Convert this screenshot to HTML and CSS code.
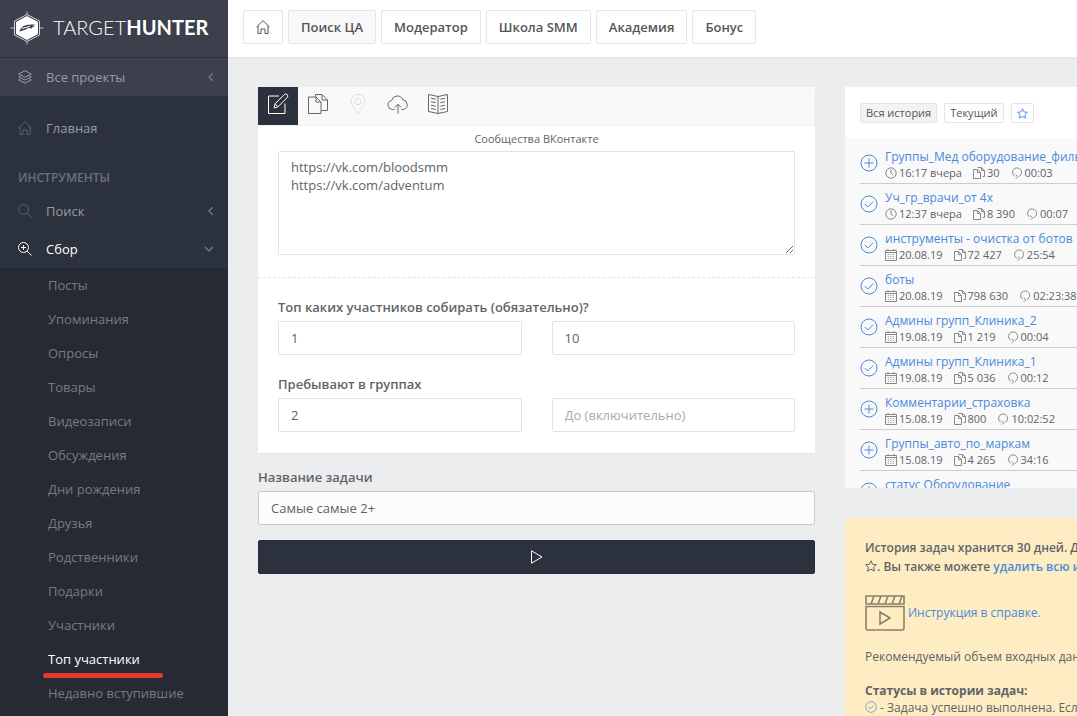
FILE: index.html
```html
<!DOCTYPE html>
<html lang="ru">
<head>
<meta charset="utf-8">
<title>TargetHunter</title>
<link rel="stylesheet" href="styles.css">
</head>
<body>
<svg class="sprite" aria-hidden="true">
  <symbol id="home" viewBox="0 0 14 14"><path d="M.5 7 7 .7 13.500 7M2 5.800v7.700h3V9h4v4.500h3V5.800"/></symbol>
  <symbol id="layers" viewBox="0 0 14 14"><path d="M7 .7 13.300 4 7 7.300.7 4zM2.600 5.800.7 6.800 7 10.100l6.300-3.300-1.900-1M2.600 8.900.7 9.900 7 13.200l6.300-3.300-1.900-1"/></symbol>
  <symbol id="search" viewBox="0 0 14 14"><circle cx="5.500" cy="5.500" r="5"/><path d="m9 9 4.500 4.500"/></symbol>
  <symbol id="zoomin" viewBox="0 0 14 14"><circle cx="5.500" cy="5.500" r="5"/><path d="m9 9 4.500 4.500M5.500 3v5M3 5.500h5"/></symbol>
  <symbol id="left" viewBox="0 0 8 8"><path d="M5.500 1 2.300 4l3.200 3"/></symbol>
  <symbol id="down" viewBox="0 0 8 8"><path d="M.8 2.400 4 5.600l3.200-3.200"/></symbol>
  <symbol id="edit" viewBox="0 0 22 22"><path d="M12 3H1.500v17.500H18V10.500M7 15l1-4.200L17.300 1.600a1.900 1.900 0 0 1 2.900 2.900L11 13.800zM8 10.800l3 3"/></symbol>
  <symbol id="copy" viewBox="0 0 22 22"><path d="M1.500 4H9l5 5v11.500H1.500zM9 4v5h5M8.500 3.800V1.500H15l5.500 5.500v10.500H14.500M15 1.500V7h5.500"/></symbol>
  <symbol id="copy-mini" viewBox="0 0 12 12"><path d="M.5 2.500h4l3 3v6h-7zM4.500 2.500v3h3M4.500.5h4l3 3v6h-2M8.500.5v3h3"/></symbol>
  <symbol id="pin" viewBox="0 0 22 22"><path d="M11 20.500C8 16 4 11.800 4 8.300a7 7 0 0 1 14 0c0 3.500-4 7.700-7 12.200z"/><circle cx="11" cy="8.500" r="3.200"/></symbol>
  <symbol id="cloud" viewBox="0 0 22 22"><path d="M7.500 16.500h-2a4.500 4.500 0 0 1-.9-8.900A5.800 5.800 0 0 1 15.700 6.700a5 5 0 0 1 .8 9.800h-2M11 20.500v-9M7.800 14.500 11 11.300l3.200 3.200"/></symbol>
  <symbol id="book" viewBox="0 0 22 22"><path d="M11 3.500 1.500 1.500v17L11 20.500l9.500-2v-17zM11 3.500v17M4 5.200l4.700 1M4 8.700l4.700 1M4 12.200l4.700 1M4 15.500l4.700 1M18 5.200l-4.700 1M18 8.700l-4.700 1M18 12.200l-4.700 1M18 15.500l-4.700 1"/></symbol>
  <symbol id="star" viewBox="0 0 12 12"><path d="M6 .8 7.600 4.300l3.800.4-2.800 2.600.8 3.800L6 9.200l-3.400 1.900.8-3.800L.6 4.700l3.800-.4z"/></symbol>
  <symbol id="plus" viewBox="0 0 18 18"><circle cx="9" cy="9" r="8"/><path d="M9 4.500v9M4.500 9h9"/></symbol>
  <symbol id="check" viewBox="0 0 18 18"><circle cx="9" cy="9" r="8"/><path d="m4.800 9 3 3 5.500-5.500"/></symbol>
  <symbol id="clock" viewBox="0 0 12 12"><circle cx="6" cy="6" r="5.200"/><path d="M6 2.500V6l2.200 2.200"/></symbol>
  <symbol id="cal" viewBox="0 0 12 12"><path d="M.5 1.500h11v10H.5zM.5 3.500h11M3 0v1.500M9 0v1.500"/><path stroke-dasharray="1 1.500" d="M2.800 5.500h7M2.800 7.500h7M2.800 9.500h7"/></symbol>
  <symbol id="loop" viewBox="0 0 12 12"><path d="M3.800 9.300a4.500 4.500 0 1 1 4.200.2M4.600 7.600 6.800 9.700 4.800 11.700"/></symbol>
  <symbol id="clip" viewBox="0 0 40 36"><path d="M1 1h38v8H1zM1 11.500h38V33a2 2 0 0 1-2 2H3a2 2 0 0 1-2-2zM6 9l3-8M13 9l3-8M20 9l3-8M27 9l3-8M34 9l3-8M15 17v12l10-6z"/></symbol>
  <symbol id="play" viewBox="0 0 14 14"><path d="M1.500 .8v12.400L12 7z"/></symbol>
</svg>

<div class="app">
  <aside class="sidebar">
    <a class="brand" href="#">
      <svg class="brand-mark" viewBox="0 0 34 34" aria-hidden="true">
        <path class="mark-line" d="M17 .5v33M.5 17h33"/>
        <path class="mark-ring" d="M17 3.500 29.500 10v14L17 30.500 4.500 24V10z"/>
        <path class="mark-fill" d="M17 5 28 11v12L17 29 6 23V11z"/>
        <path class="mark-bird" d="M9 20.500c1.500-1.300 1.200-3 3.300-4.500 3.500-2.700 7.700-2.300 13.200-2.500l-3 1.500 3 .8-4 .5.800 1.200-4.300-.6c-3 2.300-6 2.800-9 3.600z"/>
        <path class="mark-gap" d="m12 17.500 8-2.200"/>
      </svg>
      <span class="brand-name">TARGET<b>HUNTER</b></span>
    </a>
    <nav class="nav">
      <a class="nav-link projects" href="#"><svg class="icon"><use href="#layers"/></svg><span>Все проекты</span><svg class="arrow"><use href="#left"/></svg></a>
      <a class="nav-link first dim" href="#"><svg class="icon"><use href="#home"/></svg><span>Главная</span></a>
      <h2 class="nav-title">ИНСТРУМЕНТЫ</h2>
      <a class="nav-link dim" href="#"><svg class="icon"><use href="#search"/></svg><span>Поиск</span><svg class="arrow"><use href="#left"/></svg></a>
      <a class="nav-link open" href="#"><svg class="icon"><use href="#zoomin"/></svg><span>Сбор</span><svg class="arrow"><use href="#down"/></svg></a>
      <div class="submenu">
        <a href="#">Посты</a>
        <a href="#">Упоминания</a>
        <a href="#">Опросы</a>
        <a href="#">Товары</a>
        <a href="#">Видеозаписи</a>
        <a href="#">Обсуждения</a>
        <a href="#">Дни рождения</a>
        <a href="#">Друзья</a>
        <a href="#">Родственники</a>
        <a href="#">Подарки</a>
        <a href="#">Участники</a>
        <a class="current" href="#">Топ участники</a>
        <a href="#">Недавно вступившие</a>
      </div>
    </nav>
  </aside>

  <div class="page">
    <header class="topbar">
      <a class="tab tab-icon" href="#" aria-label="Главная"><svg class="icon"><use href="#home"/></svg></a>
      <a class="tab active" href="#">Поиск ЦА</a>
      <a class="tab" href="#">Модератор</a>
      <a class="tab" href="#">Школа SMM</a>
      <a class="tab" href="#">Академия</a>
      <a class="tab" href="#">Бонус</a>
    </header>

    <div class="content">
      <main>
        <form>
          <section class="card">
            <div class="tools">
              <button class="tool on" type="button" aria-label="Ввод"><svg><use href="#edit"/></svg></button>
              <button class="tool" type="button" aria-label="Из задачи"><svg><use href="#copy"/></svg></button>
              <button class="tool" type="button" aria-label="Место" disabled><svg><use href="#pin"/></svg></button>
              <button class="tool" type="button" aria-label="Загрузить"><svg><use href="#cloud"/></svg></button>
              <button class="tool" type="button" aria-label="Справка"><svg><use href="#book"/></svg></button>
            </div>
            <div class="source">
              <label for="groups">Сообщества ВКонтакте</label>
              <textarea class="field" id="groups">https://vk.com/bloodsmm
https://vk.com/adventum</textarea>
            </div>
            <div class="options">
              <div class="option">
                <label for="top-from">Топ каких участников собирать (обязательно)?</label>
                <div class="pair">
                  <input class="field" id="top-from" type="text" value="1">
                  <input class="field" type="text" value="10" aria-label="Топ: до">
                </div>
              </div>
              <div class="option">
                <label for="in-from">Пребывают в группах</label>
                <div class="pair">
                  <input class="field" id="in-from" type="text" value="2">
                  <input class="field" type="text" placeholder="До (включительно)" aria-label="До (включительно)">
                </div>
              </div>
            </div>
          </section>
          <div class="task">
            <label for="task">Название задачи</label>
            <input class="field task-name" id="task" type="text" value="Самые самые 2+">
            <button class="run" type="submit" aria-label="Запустить"><svg><use href="#play"/></svg></button>
          </div>
        </form>
      </main>

      <aside class="side">
        <section class="history">
          <div class="filters">
            <button class="filter active" type="button">Вся история</button>
            <button class="filter" type="button">Текущий</button>
            <button class="filter" type="button" aria-label="Избранное"><svg class="mini blue"><use href="#star"/></svg></button>
          </div>
          <ul class="jobs">
            <li><svg class="state"><use href="#plus"/></svg><div><a href="#">Группы_Мед оборудование_фильтр</a><p><span><svg class="mini"><use href="#clock"/></svg>16:17 вчера</span><span><svg class="mini"><use href="#copy-mini"/></svg>30</span><span><svg class="mini"><use href="#loop"/></svg>00:03</span></p></div></li>
            <li><svg class="state"><use href="#check"/></svg><div><a href="#">Уч_гр_врачи_от 4х</a><p><span><svg class="mini"><use href="#clock"/></svg>12:37 вчера</span><span><svg class="mini"><use href="#copy-mini"/></svg>8 390</span><span><svg class="mini"><use href="#loop"/></svg>00:07</span></p></div></li>
            <li><svg class="state"><use href="#check"/></svg><div><a href="#">инструменты - очистка от ботов</a><p><span><svg class="mini"><use href="#cal"/></svg>20.08.19</span><span><svg class="mini"><use href="#copy-mini"/></svg>72 427</span><span><svg class="mini"><use href="#loop"/></svg>25:54</span></p></div></li>
            <li><svg class="state"><use href="#check"/></svg><div><a href="#">боты</a><p><span><svg class="mini"><use href="#cal"/></svg>20.08.19</span><span><svg class="mini"><use href="#copy-mini"/></svg>798 630</span><span><svg class="mini"><use href="#loop"/></svg>02:23:38</span></p></div></li>
            <li><svg class="state"><use href="#check"/></svg><div><a href="#">Админы групп_Клиника_2</a><p><span><svg class="mini"><use href="#cal"/></svg>19.08.19</span><span><svg class="mini"><use href="#copy-mini"/></svg>1 219</span><span><svg class="mini"><use href="#loop"/></svg>00:04</span></p></div></li>
            <li><svg class="state"><use href="#check"/></svg><div><a href="#">Админы групп_Клиника_1</a><p><span><svg class="mini"><use href="#cal"/></svg>19.08.19</span><span><svg class="mini"><use href="#copy-mini"/></svg>5 036</span><span><svg class="mini"><use href="#loop"/></svg>00:12</span></p></div></li>
            <li><svg class="state"><use href="#plus"/></svg><div><a href="#">Комментарии_страховка</a><p><span><svg class="mini"><use href="#cal"/></svg>15.08.19</span><span><svg class="mini"><use href="#copy-mini"/></svg>800</span><span><svg class="mini"><use href="#loop"/></svg>10:02:52</span></p></div></li>
            <li><svg class="state"><use href="#plus"/></svg><div><a href="#">Группы_авто_по_маркам</a><p><span><svg class="mini"><use href="#cal"/></svg>15.08.19</span><span><svg class="mini"><use href="#copy-mini"/></svg>4 265</span><span><svg class="mini"><use href="#loop"/></svg>34:16</span></p></div></li>
            <li><svg class="state"><use href="#plus"/></svg><div><a href="#">статус Оборудование</a></div></li>
          </ul>
        </section>
        <section class="note">
          <p class="strong">История задач хранится 30 дней. Для<br><svg class="mini"><use href="#star"/></svg>. Вы также можете <a href="#">удалить всю историю</a></p>
          <a class="guide" href="#"><svg><use href="#clip"/></svg>Инструкция в справке.</a>
          <p class="advice">Рекомендуемый объем входных данных</p>
          <h3>Статусы в истории задач:</h3>
          <p class="status"><svg class="mini blue"><use href="#check"/></svg> - Задача успешно выполнена. Если</p>
        </section>
      </aside>
    </div>
  </div>
</div>
</body>
</html>
```
FILE: styles.css
```css
* { box-sizing: border-box; }

body {
  margin: 0;
  font: 13px/18px "Open Sans", "Noto Sans", sans-serif;
  color: #606468;
  background: #ebedef;
}

a { color: #4a89dc; text-decoration: none; }
p, ul, h2, h3 { margin: 0; padding: 0; }
label { display: block; }
button, input, textarea { font: inherit; color: inherit; }

svg { fill: none; stroke: currentColor; stroke-width: 1; }
.sprite { position: absolute; width: 0; height: 0; }
.icon { width: 14px; height: 14px; flex: none; }
.mini { width: 12px; height: 12px; flex: none; }
.blue { color: #4a89dc; }

.app { display: flex; height: 100vh; overflow: hidden; }

/* Sidebar */
.sidebar { flex: 0 0 228px; background: #2b323d; overflow: hidden; }
.brand {
  display: flex;
  align-items: center;
  gap: 9px;
  height: 58px;
  padding: 0 10px 2px;
  background: #3b404c;
  border-bottom: 1px solid #2b303a;
  color: #fff;
}
.brand-mark { width: 34px; height: 34px; flex: none; }
.mark-line { stroke: #b9bcc2; }
.mark-ring { fill: #3b404c; stroke: #d4d6da; }
.mark-fill { fill: #fff; stroke: none; }
.mark-bird { fill: #3b404c; stroke: none; }
.mark-gap { stroke: #fff; }
.brand-name { padding-bottom: 2px; font: 400 20px/24px Lato, "Open Sans", sans-serif; }
.brand-name { font-weight: 300; }
.brand-name b { font-weight: 700; }

.nav-link {
  display: flex;
  align-items: center;
  gap: 14px;
  height: 38px;
  padding: 0 12px 0 18px;
  color: #999ca2;
  font-weight: 500;
}
.nav-link span { flex: 1; }
.nav-link.first { margin-top: 13px; }
.projects { background: #3b404c; }
.dim .icon { color: #5b616b; }
.nav-link.open { padding-right: 14px; color: #fff; }
.arrow { width: 10px; height: 10px; color: #777b83; }
.nav-title {
  padding: 22px 18px 5px;
  font-size: 12px;
  line-height: 18px;
  font-weight: 600;
  color: #6c7079;
}
.submenu { background: #252a35; padding-bottom: 34px; }
.submenu a {
  display: block;
  position: relative;
  padding-left: 48px;
  line-height: 34px;
  font-weight: 500;
  color: #777b81;
}
.submenu .current { color: #fff; }
.current::after {
  content: "";
  position: absolute;
  left: 43px;
  bottom: -2px;
  width: 120px;
  height: 5px;
  border-radius: 3px;
  background: #e23b2e;
}

/* Top bar */
.page { flex: 1; min-width: 0; }
.topbar {
  display: flex;
  gap: 5px;
  height: 57px;
  padding: 10px 15px;
  background: #fff;
  box-shadow: 0 1px 3px #0000000a;
}
.tab {
  display: flex;
  align-items: center;
  height: 34px;
  padding: 0 12px;
  border: 1px solid #e5e5e5;
  border-radius: 2px;
  color: #555;
  font-weight: 600;
  white-space: nowrap;
}
.tab.active { background: #f8f8f8; }

.content {
  display: grid;
  grid-template-columns: minmax(0, 1fr) 232px;
  gap: 30px;
  padding: 30px 0 0 30px;
}

/* Form */
.card { background: #fff; box-shadow: 0 1px 2px #00000008; }
.tools { display: flex; background: #f9f9f9; border-bottom: 1px solid #f0f0f0; }
.tool {
  display: flex;
  align-items: center;
  justify-content: center;
  width: 40px;
  height: 38px;
  padding: 0 0 4px;
  border: 0;
  background: none;
  color: #666;
}
.tool svg { width: 22px; height: 22px; }
.tool.on { background: #2b323d; color: #fff; }
.tool:disabled { color: #ddd; }

.field {
  display: block;
  width: 100%;
  height: 34px;
  padding: 6px 12px;
  border: 1px solid #e2e2e2;
  border-radius: 2px;
  background: #fff;
}
.field::placeholder { color: #aaa; opacity: 1; }
.source { padding: 4px 20px 22px; }
.source label { font-size: 11px; line-height: 18px; padding-bottom: 3px; text-align: center; }
textarea.field { height: 104px; resize: vertical; }
.options {
  display: grid;
  gap: 20px;
  padding: 20px 20px 21px;
  border-top: 1px dashed #e2e2e2;
}
.option label, .task label { font-weight: 600; padding-bottom: 5px; }
.pair { display: grid; grid-template-columns: 1fr 1fr; gap: 30px; }
.task { padding-top: 15px; }
.task-name { border-color: #ccc; background: #fcfcfc; }
.run {
  display: flex;
  align-items: center;
  justify-content: center;
  width: 100%;
  height: 34px;
  margin-top: 15px;
  border: 1px solid #262c37;
  border-radius: 2px;
  background: #2b323d;
  color: #fff;
}
.run svg { width: 14px; height: 14px; }

/* History */
.side { min-width: 0; overflow: hidden; white-space: nowrap; }
.history { background: #fff; }
.filters { display: flex; gap: 7px; padding: 16px 15px 15px; }
.filter {
  display: flex;
  align-items: center;
  height: 20px;
  padding: 0 5px;
  border: 1px solid #e5e5e5;
  border-radius: 2px;
  background: #fff;
  color: #555;
  font-size: 11px;
}
.filter.active { background: #f3f3f3; }
.filter .mini { width: 11px; height: 11px; }
.jobs { height: 350px; padding: 5px 0 0 15px; background: #f9f9f9; overflow: hidden; list-style: none; }
.jobs li {
  display: flex;
  gap: 7px;
  height: 41px;
  padding-top: 5px;
  border-bottom: 1px solid #ccc;
}
.jobs div { min-width: 0; }
.jobs a { display: block; font-size: 12px; line-height: 17px; }
.jobs p { display: flex; gap: 11px; font-size: 11px; line-height: 16px; }
.jobs span { display: flex; align-items: center; gap: 2px; }
.jobs .mini { color: #888; }
.state { width: 18px; height: 18px; margin-top: 6px; flex: none; color: #4a89dc; }

/* Note */
.note {
  margin-top: 30px;
  padding: 20px;
  background: #feedc2;
  font-size: 12px;
  min-height: 300px;
}
.note .mini { vertical-align: -1px; }
.strong { font-weight: 600; line-height: 19px; }
.guide { display: flex; align-items: center; gap: 3px; margin: 19px 0 17px; }
.guide svg { width: 40px; height: 36px; color: #8b8069; stroke-width: 1.600; }
.note h3 { margin-top: 16px; font-size: 12px; line-height: 17px; font-weight: 700; }
.status { line-height: 17px; }
```
